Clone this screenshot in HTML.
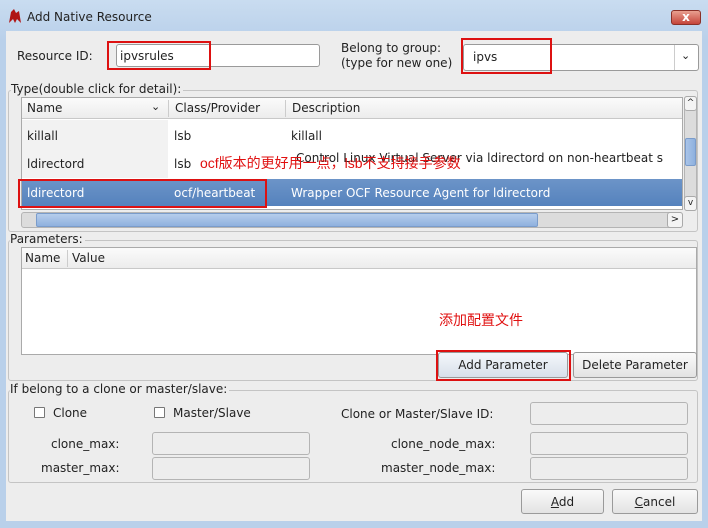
<!DOCTYPE html>
<html><head><meta charset="utf-8"><style>
*{box-sizing:border-box;margin:0;padding:0}
body{width:708px;height:528px;overflow:hidden;background:linear-gradient(#c9dcf0,#b9d0ea 40px,#b9d0ea);font-family:"DejaVu Sans","Liberation Sans","Noto Sans CJK SC",sans-serif;font-size:12px;color:#222;position:relative}
.a{position:absolute}
.t{position:absolute;white-space:nowrap;line-height:14px}
.content{left:6px;top:31px;width:696px;height:490px;background:#ededed}
.inp{background:#fff;border:1px solid #9a9a9a;border-radius:3px}
.dis{background:#ededed;border:1px solid #b4b4b4;border-radius:3px}
.grp{border:1px solid #c4c4c4;border-radius:3px}
.red{border:2px solid #d11;}
.btn{border:1px solid #9a9a9a;border-radius:3px;background:linear-gradient(#fafafa,#e3e3e3);text-align:center;line-height:24px}
.cb{width:11px;height:11px;border:1px solid #777;background:#fff;border-radius:1px}
.rt{color:#e01010;font-family:"Liberation Sans","Noto Sans CJK SC",sans-serif;font-size:14px}
</style></head><body>
<svg class="a" style="left:7px;top:8px" width="16" height="16" viewBox="0 0 16 16"><path d="M2 15 L4 4 L7 1 L9 5 L12 3 L14 15 L10 11 L8 15 L6 11Z" fill="#b01515"/></svg>
<div class="t" style="left:27px;top:10px;font-size:12px">Add Native Resource</div>
<div class="a" style="left:671px;top:10px;width:30px;height:15px;border-radius:3px;background:linear-gradient(#e8a090,#c5443a);border:1px solid #8a3028;color:#fff;font-weight:bold;text-align:center;line-height:13px;font-size:12px">x</div>
<div class="a content"></div>

<div class="t" style="left:17px;top:49px">Resource ID:</div>
<div class="a inp" style="left:116px;top:44px;width:204px;height:23px"></div>
<div class="t" style="left:120px;top:49px">ipvsrules</div>
<div class="a red" style="left:107px;top:41px;width:104px;height:29px"></div>
<div class="t" style="left:341px;top:41px">Belong to group:</div>
<div class="t" style="left:341px;top:56px">(type for new one)</div>
<div class="a inp" style="left:463px;top:44px;width:236px;height:27px"></div>
<div class="a" style="left:674px;top:45px;width:1px;height:25px;background:#ccc"></div>
<div class="t" style="left:681px;top:49px;font-size:11px">&#8964;</div>
<div class="t" style="left:473px;top:50px">ipvs</div>
<div class="a red" style="left:461px;top:38px;width:91px;height:36px"></div>

<div class="a grp" style="left:8px;top:90px;width:690px;height:142px"></div>
<div class="t" style="left:11px;top:82px;background:#ededed;padding-right:2px">Type(double click for detail):</div>
<div class="a" style="left:21px;top:97px;width:662px;height:113px;background:#fff;border:1px solid #aaa"></div>
<div class="a" style="left:22px;top:98px;width:660px;height:21px;background:linear-gradient(#fbfbfb,#ececec);border-bottom:1px solid #c8c8c8"></div>
<div class="a" style="left:168px;top:100px;width:1px;height:17px;background:#ccc"></div>
<div class="a" style="left:285px;top:100px;width:1px;height:17px;background:#ccc"></div>
<div class="t" style="left:27px;top:101px">Name</div>
<div class="t" style="left:151px;top:100px;font-size:11px">&#8964;</div>
<div class="t" style="left:175px;top:101px">Class/Provider</div>
<div class="t" style="left:292px;top:101px">Description</div>
<div class="a" style="left:22px;top:120px;width:146px;height:58px;background:#f2f2f2"></div>
<div class="t" style="left:27px;top:129px">killall</div><div class="t" style="left:174px;top:129px">lsb</div><div class="t" style="left:291px;top:129px">killall</div>
<div class="t" style="left:27px;top:157px">ldirectord</div><div class="t" style="left:174px;top:157px">lsb</div><div class="t" style="left:296px;top:151px">Control Linux Virtual Server via ldirectord on non-heartbeat s</div>
<div class="a" style="left:22px;top:179px;width:660px;height:27px;background:linear-gradient(#6c94c8,#5582bd)"></div>
<div class="t" style="left:27px;top:186px;color:#fff">ldirectord</div><div class="t" style="left:174px;top:186px;color:#fff">ocf/heartbeat</div><div class="t" style="left:291px;top:186px;color:#fff">Wrapper OCF Resource Agent for ldirectord</div>
<div class="t rt" style="left:200px;top:156px">ocf版本的更好用一点，lsb不支持接手参数</div>
<div class="a red" style="left:18px;top:179px;width:249px;height:29px"></div>
<div class="a" style="left:684px;top:96px;width:13px;height:115px;background:#dcdcdc;border:1px solid #b4b4b4;border-radius:3px"></div>
<div class="a" style="left:684px;top:96px;width:13px;height:15px;background:#f4f4f4;border:1px solid #aaa;border-radius:3px;font-size:9px;text-align:center;line-height:12px">^</div>
<div class="a" style="left:685px;top:138px;width:11px;height:28px;background:linear-gradient(90deg,#a9c4e8,#8db0de);border:1px solid #7a9ccb;border-radius:2px"></div>
<div class="a" style="left:684px;top:196px;width:13px;height:15px;background:#f4f4f4;border:1px solid #aaa;border-radius:3px;font-size:9px;text-align:center;line-height:12px">v</div>
<div class="a" style="left:21px;top:212px;width:662px;height:16px;background:#dcdcdc;border:1px solid #b4b4b4;border-radius:3px"></div>
<div class="a" style="left:36px;top:213px;width:502px;height:14px;background:linear-gradient(#b6cdec,#8fb1de);border:1px solid #7a9ccb;border-radius:2px"></div>
<div class="a" style="left:667px;top:212px;width:16px;height:16px;background:#f4f4f4;border:1px solid #aaa;border-radius:3px;font-size:10px;text-align:center;line-height:13px">&gt;</div>

<div class="a grp" style="left:8px;top:240px;width:690px;height:141px"></div>
<div class="t" style="left:10px;top:232px;background:#ededed;padding-right:2px">Parameters:</div>
<div class="a" style="left:21px;top:247px;width:676px;height:108px;background:#fff;border:1px solid #aaa"></div>
<div class="a" style="left:22px;top:248px;width:674px;height:21px;background:linear-gradient(#fbfbfb,#ececec);border-bottom:1px solid #c8c8c8"></div>
<div class="a" style="left:67px;top:250px;width:1px;height:17px;background:#ccc"></div>
<div class="t" style="left:25px;top:251px">Name</div><div class="t" style="left:72px;top:251px">Value</div>
<div class="t rt" style="left:439px;top:313px">添加配置文件</div>
<div class="a btn" style="left:438px;top:352px;width:130px;height:26px;background:linear-gradient(#f4f7fb,#d8e0ea)">Add Parameter</div>
<div class="a red" style="left:436px;top:350px;width:135px;height:31px"></div>
<div class="a btn" style="left:573px;top:352px;width:124px;height:26px">Delete Parameter</div>

<div class="a grp" style="left:8px;top:390px;width:690px;height:93px"></div>
<div class="t" style="left:10px;top:382px;background:#ededed;padding-right:2px">If belong to a clone or master/slave:</div>
<div class="a cb" style="left:34px;top:407px"></div><div class="t" style="left:53px;top:406px">Clone</div>
<div class="a cb" style="left:154px;top:407px"></div><div class="t" style="left:173px;top:406px">Master/Slave</div>
<div class="t" style="left:341px;top:407px">Clone or Master/Slave ID:</div>
<div class="a dis" style="left:530px;top:402px;width:158px;height:23px"></div>
<div class="t" style="left:51px;top:437px">clone_max:</div>
<div class="a dis" style="left:152px;top:432px;width:158px;height:23px"></div>
<div class="t" style="left:391px;top:437px">clone_node_max:</div>
<div class="a dis" style="left:530px;top:432px;width:158px;height:23px"></div>
<div class="t" style="left:41px;top:461px">master_max:</div>
<div class="a dis" style="left:152px;top:457px;width:158px;height:23px"></div>
<div class="t" style="left:381px;top:461px">master_node_max:</div>
<div class="a dis" style="left:530px;top:457px;width:158px;height:23px"></div>

<div class="a btn" style="left:521px;top:489px;width:83px;height:25px"><u>A</u>dd</div>
<div class="a btn" style="left:612px;top:489px;width:86px;height:25px"><u>C</u>ancel</div>
</body></html>
